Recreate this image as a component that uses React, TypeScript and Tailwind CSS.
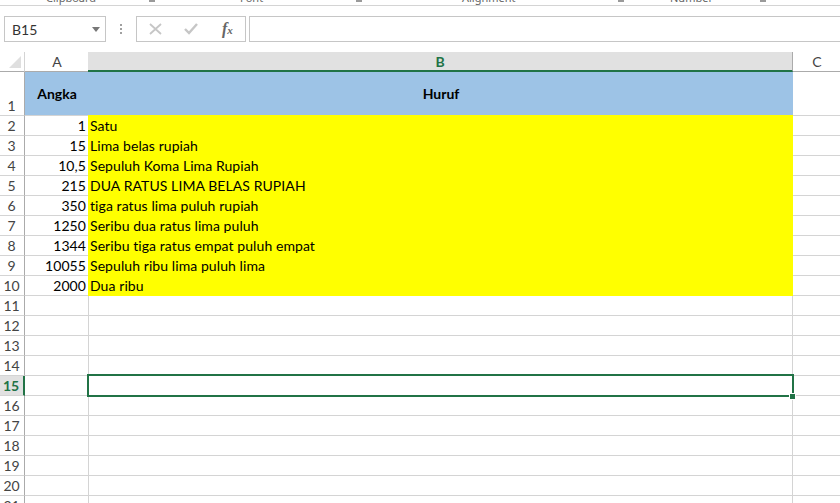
const data: [string, string][] = [
  ["1", "Satu"],
  ["15", "Lima belas rupiah"],
  ["10,5", "Sepuluh Koma Lima Rupiah"],
  ["215", "DUA RATUS LIMA BELAS RUPIAH"],
  ["350", "tiga ratus lima puluh rupiah"],
  ["1250", "Seribu dua ratus lima puluh"],
  ["1344", "Seribu tiga ratus empat puluh empat"],
  ["10055", "Sepuluh ribu lima puluh lima"],
  ["2000", "Dua ribu"],
];

const emptyRows = [11, 12, 13, 14, 15, 16, 17, 18, 19, 20, 21];

function Launcher() {
  return <div className="mb-[3px] h-[2px] w-[6px] bg-[#9a9a9a]" />;
}

function Row({ num, a, b }: { num: number; a?: string; b?: string }) {
  const active = num === 15;
  return (
    <div className="flex h-5">
      <div
        className={
          active
            ? "flex w-[25px] items-end justify-center border-r-2 border-b border-r-[#217346] border-b-[#d4d4d4] bg-[#e1e1e1] pr-[1px] text-[14px] leading-[18px] font-bold text-[#217346]"
            : "flex w-[25px] items-end justify-center border-r border-b border-r-[#ababab] border-b-[#d4d4d4] pr-[1px] text-[14px] leading-[18px] text-[#444]"
        }
      >
        {num}
      </div>
      {b ? (
        <>
          <div className="w-[63px] border-b border-[#d4d4d4] pr-[2px] text-right text-[14px] leading-[19px] tracking-[0.08px] text-black">{a}</div>
          <div className="w-[705px] bg-[#ffff00] pl-[2px] text-[14px] leading-[19px] tracking-[0.08px] text-black">{b}</div>
        </>
      ) : (
        <>
          <div className="w-[64px] border-r border-b border-[#d4d4d4]" />
          <div className="w-[704px] border-r border-b border-[#d4d4d4]" />
        </>
      )}
      <div className="flex-1 border-b border-[#d4d4d4]" />
    </div>
  );
}

export default function App() {
  return (
    <div className="h-[503px] w-[840px] overflow-hidden bg-white font-['Lato','Open_Sans',sans-serif]">
      {/* what is left of the ribbon */}
      <div className="h-[6px] border-b border-[#d4d4d4] font-['Noto_Sans',sans-serif] text-[11px] leading-[14px] text-[#666]">
        <div className="flex h-[5px] items-end overflow-hidden whitespace-nowrap">
          <span className="ml-[46px] w-[103px] shrink-0">Clipboard</span>
          <Launcher />
          <span className="ml-[85px] w-[116px] shrink-0">Font</span>
          <Launcher />
          <span className="ml-[100px] w-[156px] shrink-0">Alignment</span>
          <Launcher />
          <span className="ml-[46px] w-[90px] shrink-0">Number</span>
          <Launcher />
        </div>
      </div>

      {/* formula bar */}
      <div className="mt-[10px] flex h-[26px] items-stretch">
        <div className="ml-1 flex w-[102px] items-center justify-between border border-[#c6c6c6] pr-[5px] pl-[7px] text-[14px] text-[#333]">
          <span>B15</span>
          <svg width="8" height="5" viewBox="0 0 8 5">
            <path d="M0 0h8L4 5z" fill="#777" />
          </svg>
        </div>
        <div className="flex w-[30px] flex-col items-center justify-center gap-[2px]">
          <div className="h-[2px] w-[2px] bg-[#a0a0a0]" />
          <div className="h-[2px] w-[2px] bg-[#a0a0a0]" />
          <div className="h-[2px] w-[2px] bg-[#a0a0a0]" />
        </div>
        <div className="flex w-[110px] items-center border border-[#c6c6c6]">
          <svg className="ml-[12px]" width="13" height="12" viewBox="0 0 13 12">
            <path d="M1 1l11 10M12 1L1 11" stroke="#c6c6c6" strokeWidth="1.8" />
          </svg>
          <svg className="ml-[22px]" width="14" height="12" viewBox="0 0 14 12">
            <path d="M1 6l4 4 8-9" stroke="#c6c6c6" strokeWidth="2.4" fill="none" />
          </svg>
          <span className="ml-[24px] font-['Liberation_Serif',serif] text-[16px] leading-none font-bold text-[#666] italic">
            f<span className="text-[11px]">x</span>
          </span>
        </div>
        <div className="ml-[3px] flex-1 border-y border-l border-[#c6c6c6]" />
      </div>

      {/* column headers */}
      <div className="mt-[10px] flex h-5">
        <div className="w-[25px] border-r border-b border-r-[#d4d4d4] border-b-[#ababab]">
          <svg className="mt-1 ml-[9px]" width="12" height="12" viewBox="0 0 12 12">
            <path d="M12 0v12H0z" fill="#dfdfdf" />
          </svg>
        </div>
        <div className="w-[63px] border-b border-[#ababab] pl-[1px] text-center text-[14px] leading-[19px] text-[#444]">A</div>
        <div className="w-[705px] border-r border-b-2 border-r-[#ababab] border-b-[#217346] bg-[#e1e1e1] text-center text-[14px] leading-[19px] font-bold text-[#217346]">
          B
        </div>
        <div className="flex-1 border-b border-[#ababab] pl-[1px] text-center text-[14px] leading-[19px] text-[#444]">C</div>
      </div>

      {/* sheet */}
      <div className="relative">
        <div className="flex h-11">
          <div className="flex w-[25px] items-end justify-center border-r border-b border-r-[#ababab] border-b-[#d4d4d4] pr-[1px] text-[14px] leading-[18px] text-[#444]">
            1
          </div>
          <div className="flex w-[768px] flex-col">
            <div className="flex h-[43px] bg-[#9dc3e6] text-[14px] font-bold text-black">
              <div className="flex w-[63px] items-center justify-center pl-[1px]">Angka</div>
              <div className="flex flex-1 items-center justify-center pl-[1px]">Huruf</div>
            </div>
            <div className="flex h-[1px]">
              <div className="w-[63px] bg-[#d4d4d4]" />
              <div className="flex-1 bg-[#ffff00]" />
            </div>
          </div>
          <div className="flex-1 border-b border-[#d4d4d4]" />
        </div>
        {data.map(([a, b], i) => (
          <Row key={i} num={i + 2} a={a} b={b} />
        ))}
        {emptyRows.map((n) => (
          <Row key={n} num={n} />
        ))}
        {/* selected cell B15 */}
        <div className="absolute top-[302px] left-[87px] h-[23px] w-[707px] border-2 border-[#217346]" />
        <div className="absolute top-[321px] left-[789px] h-[7px] w-[7px] border border-white bg-[#217346]" />
      </div>
    </div>
  );
}
